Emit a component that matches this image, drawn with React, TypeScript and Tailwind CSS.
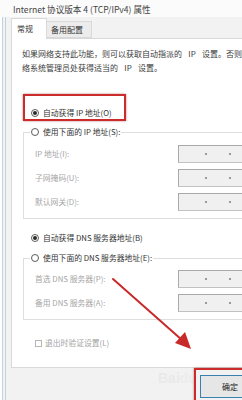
import React from "react";

function Radio({ checked }: { checked?: boolean }) {
  return (
    <span className="w-[8px] h-[8px] rounded-full border border-[#5c5c5c] bg-white flex items-center justify-center shrink-0">
      {checked && <span className="w-[4px] h-[4px] rounded-full bg-[#2a2a2a]" />}
    </span>
  );
}

function IpBox() {
  return (
    <div className="w-[120px] h-[18px] border border-[#c2c2c2] border-t-[#a9a9a9] border-l-[#a9a9a9] bg-[#f0f0f0] flex items-center shrink-0">
      <div className="w-[26px]" />
      <span className="w-[2px] h-[2px] bg-[#9a9a9a]" />
      <div className="w-[22px]" />
      <span className="w-[2px] h-[2px] bg-[#9a9a9a]" />
      <div className="w-[22px]" />
      <span className="w-[2px] h-[2px] bg-[#9a9a9a]" />
    </div>
  );
}

function Field({ label }: { label: React.ReactNode }) {
  return (
    <div className="flex items-center h-[18px]">
      <div className="w-[154px] pl-[11px] text-[#a6a6a6] whitespace-nowrap">{label}</div>
      <IpBox />
    </div>
  );
}

export default function App() {
  return (
    <div className="w-[242px] h-[400px] overflow-hidden relative bg-[#f2f2f2] font-['Noto_Sans_CJK_SC','Microsoft_YaHei',sans-serif] text-[7.8px] leading-[14px] text-[#333]">
      {/* title bar */}
      <div className="h-[17px] bg-[#fbfbfb] flex items-center pl-[13px] text-[8.6px] text-[#444] whitespace-nowrap">
        Internet 协议版本 4 (TCP/IPv4) 属性
      </div>
      <div className="flex h-[383px]">
        {/* window frame */}
        <div className="flex shrink-0 h-full">
          <div className="w-[2px] bg-white" />
          <div className="w-[1px] bg-[#bcd3ea]" />
          <div className="w-[2px] bg-[#eef3f8]" />
          <div className="w-[1px] bg-[#cfcfcf]" />
        </div>
        <div className="w-[320px] shrink-0 pl-[5px] flex flex-col">
          {/* tabs */}
          <div className="h-[21px] flex items-start relative z-10">
            <div className="mt-[1px] h-[21px] w-[36px] bg-white border border-b-0 border-[#d9d9d9] flex items-center pl-[5px] text-[8px] text-[#333]">
              常规
            </div>
            <div className="mt-[4px] h-[17px] w-[45px] bg-[#ececec] border border-l-0 border-[#d9d9d9] flex items-center pl-[4px] text-[8px] text-[#333]">
              备用配置
            </div>
          </div>
          {/* tab page */}
          <div className="h-[330px] bg-white border border-r-0 border-[#d9d9d9] flex flex-col">
            <div className="pt-[8px] pl-[10px] whitespace-nowrap text-[8px] text-[#3a3a3a]">
              <div>
                如果网络支持此功能，则可以获取自动指派的<span className="inline-block w-[20px] text-center">IP</span>设置。否则，你需要从网
              </div>
              <div>
                络系统管理员处获得适当的<span className="inline-block w-[20px] text-center">IP</span>设置。
              </div>
            </div>
            <div className="mt-[31px] ml-[19px] h-[14px] flex items-center gap-[4px] whitespace-nowrap">
              <Radio checked />
              <span>自动获得 IP 地址(O)</span>
            </div>
            <fieldset className="mt-[5px] ml-[11px] border border-[#dedede] border-r-0 pb-[7px]">
              <legend className="ml-[6px] px-[1px] h-[14px]">
                <span className="flex items-center gap-[4px] whitespace-nowrap h-[14px]">
                  <Radio />
                  <span>使用下面的 IP 地址(S):</span>
                </span>
              </legend>
              <div className="pt-[6px] flex flex-col gap-[6px]">
                <Field label="IP 地址(I):" />
                <Field label="子网掩码(U):" />
                <Field label="默认网关(D):" />
              </div>
            </fieldset>
            <div className="mt-[12px] ml-[19px] h-[14px] flex items-center gap-[4px] whitespace-nowrap">
              <Radio checked />
              <span>自动获得 DNS 服务器地址(B)</span>
            </div>
            <fieldset className="mt-[6px] ml-[11px] border border-[#dedede] border-r-0 pb-[7px]">
              <legend className="ml-[6px] px-[1px] h-[14px]">
                <span className="flex items-center gap-[4px] whitespace-nowrap h-[14px]">
                  <Radio />
                  <span>使用下面的 DNS 服务器地址(E):</span>
                </span>
              </legend>
              <div className="pt-[5px] flex flex-col gap-[6px]">
                <Field label="首选 DNS 服务器(P):" />
                <Field label="备用 DNS 服务器(A):" />
              </div>
            </fieldset>
            <div className="mt-[16px] ml-[23px] h-[14px] flex items-center gap-[3px] whitespace-nowrap text-[#a3a3a3]">
              <span className="w-[7px] h-[7px] border border-[#b5b5b5] bg-white shrink-0" />
              <span>退出时验证设置(L)</span>
            </div>
          </div>
          {/* bottom buttons */}
          <div className="flex-1 pt-[7px] pl-[189px]">
            <div className="w-[60px] h-[23px] border border-[#3c7fb1] bg-[#e6e6e6] flex items-center pl-[21px] text-[8px] text-[#222]">
              确定
            </div>
          </div>
        </div>
      </div>

      {/* watermark */}
      <div className="absolute left-[158px] top-[370px] text-[14px] leading-[16px] font-bold text-[#e2e2e2] opacity-50 whitespace-nowrap pointer-events-none font-['Liberation_Sans',sans-serif]">
        Bai<span className="text-[#e8e8e8]">du</span>
      </div>

      {/* red annotation boxes */}
      <div className="absolute left-[23px] top-[94px] w-[103px] h-[27px] border-2 border-[#cc2b2b] shadow-[0_0_2px_rgba(120,0,0,0.5)] pointer-events-none" />
      <div className="absolute left-[194px] top-[368px] w-[60px] h-[40px] border-2 border-[#cc2b2b] shadow-[0_0_2px_rgba(120,0,0,0.5)] pointer-events-none" />

      {/* arrow */}
      <svg className="absolute left-0 top-0 pointer-events-none" width="242" height="400" viewBox="0 0 242 400">
        <line x1="113" y1="279" x2="182" y2="340" stroke="#c82a2a" strokeWidth="2" strokeLinecap="round" />
        <polygon points="191,349 175,343 185,332" fill="#c82a2a" />
      </svg>
    </div>
  );
}
